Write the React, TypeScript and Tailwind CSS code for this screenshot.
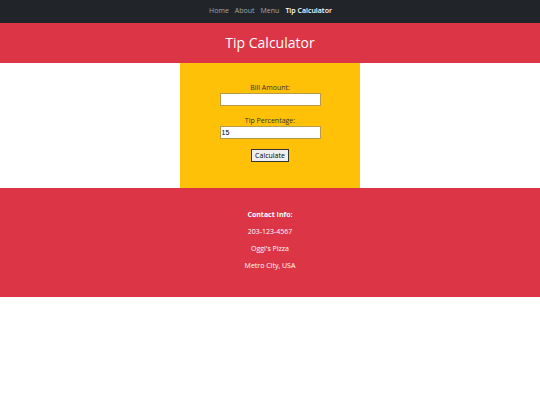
export default function App() {
  return (
    <div className="min-h-[405px] bg-white font-['Open_Sans','Noto_Sans',sans-serif]">
      <nav className="flex h-[23px] items-center justify-center gap-[6px] bg-[#212529] pl-[1px] text-[7px]">
        <a className="text-[#a2a5a8]">Home</a>
        <a className="text-[#a2a5a8]">About</a>
        <a className="text-[#a2a5a8]">Menu</a>
        <a className="font-semibold text-white">Tip Calculator</a>
      </nav>

      <header className="flex h-[40px] items-center justify-center bg-[#dc3545] pb-[2px]">
        <h1 className="text-[14px] text-white">Tip Calculator</h1>
      </header>

      <main className="flex justify-center">
        <div className="flex h-[125px] w-[180px] flex-col items-center bg-[#ffc107] pt-[20px] text-[7px] text-[#333]">
          <label className="leading-[10px]">Bill Amount:</label>
          <input className="h-[13px] w-[101px] border border-[#b89a4a] bg-white px-[1px] font-['Liberation_Sans',Arial,sans-serif] text-[7px]" />
          <label className="mt-[10px] leading-[10px]">Tip Percentage:</label>
          <input
            defaultValue="15"
            className="h-[13px] w-[101px] border border-[#b89a4a] bg-white px-[1px] font-['Liberation_Sans',Arial,sans-serif] text-[7px] text-black"
          />
          <button className="mt-[10px] h-[13px] border border-[#333] bg-[#efefef] px-[3px] text-[7px] leading-[10px] text-black">
            Calculate
          </button>
        </div>
      </main>

      <footer className="flex h-[109px] flex-col items-center bg-[#dc3545] pt-[22px] text-[7px] leading-[10px] text-white">
        <p className="font-bold">Contact Info:</p>
        <p className="mt-[7px]">203-123-4567</p>
        <p className="mt-[7px]">Oggi's Pizza</p>
        <p className="mt-[7px]">Metro City, USA</p>
      </footer>
    </div>
  );
}
